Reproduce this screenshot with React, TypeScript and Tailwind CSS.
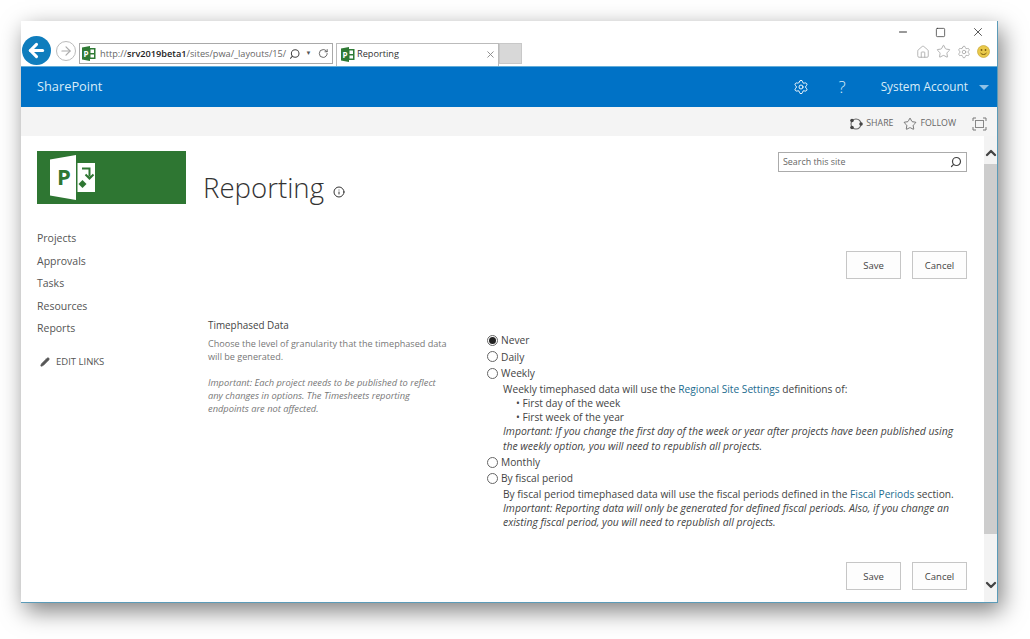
import React from "react";
import { Settings, RotateCw, Search, Star, Home, X, Minus, Square, ChevronUp, ChevronDown, Pencil, ArrowLeft, ArrowRight, Info } from "lucide-react";

function ProjIcon() {
  return (
    <svg width="14" height="15" viewBox="0 0 14 15" className="shrink-0">
      <rect x="5" y="2" width="8.500" height="11" fill="#2f7a35" />
      <rect x="8.500" y="3.500" width="3.500" height="3.500" fill="#fff" />
      <rect x="8.500" y="8.500" width="3.500" height="3" fill="#fff" />
      <path d="M0 1.500L8 0v15l-8-1.500z" fill="#2f7a35" />
      <text x="1.400" y="10.500" fontSize="8" fontWeight="700" fill="#fff" fontFamily="'Open Sans',sans-serif">P</text>
    </svg>
  );
}

function Logo() {
  return (
    <div className="w-[149px] h-[53px] bg-[#2e7632] shrink-0">
      <svg width="149" height="53" viewBox="0 0 149 53">
        <path d="M13 8.500L39 4V49L13 44.500z" fill="#fff" />
        <rect x="40.500" y="12" width="17.500" height="29" fill="#fff" />
        <text x="20" y="34" fontSize="22" fontWeight="700" fill="#2e7632" fontFamily="'Open Sans',sans-serif">P</text>
        <path d="M45 17.500h7.500v8M48.500 23.500l4 4 4-4" stroke="#2e7632" strokeWidth="2" fill="none" />
        <path d="M45.500 29l4 4-4 4-4-4z" fill="#2e7632" />
      </svg>
    </div>
  );
}

function ShareIcon() {
  return (
    <svg width="14" height="14" viewBox="0 0 14 14" className="mr-[3px]">
      <circle cx="7" cy="7" r="5" fill="none" stroke="#666" strokeWidth="1.100" />
      <circle cx="3" cy="3.500" r="1.800" fill="#444" />
      <circle cx="3" cy="10.500" r="1.800" fill="#444" />
      <circle cx="12" cy="7" r="1.800" fill="#444" />
    </svg>
  );
}

function FocusIcon() {
  return (
    <svg width="15" height="14" viewBox="0 0 15 14" className="mr-[10px]">
      <path d="M1 4V1h3M11 1h3v3M14 10v3h-3M4 13H1v-3" fill="none" stroke="#777" />
      <rect x="3.500" y="3.500" width="8" height="7" fill="none" stroke="#888" />
    </svg>
  );
}

function Radio({ checked, label }: { checked?: boolean; label: string }) {
  return (
    <div className="flex items-center h-[16.500px]">
      <span className="w-[11px] h-[11px] rounded-full border border-[#666] flex items-center justify-center mr-[3px] bg-white shrink-0">
        {checked && <span className="w-[7px] h-[7px] rounded-full bg-[#222]" />}
      </span>
      <span>{label}</span>
    </div>
  );
}

function Btn({ label }: { label: string }) {
  return (
    <div className="w-[55px] h-[28px] pt-[2px] border border-[#c6c6c6] bg-[#fdfdfd] flex items-center justify-center text-[9.500px] text-[#444]">
      {label}
    </div>
  );
}

function Buttons() {
  return (
    <div className="flex justify-end gap-[11px]">
      <Btn label="Save" />
      <Btn label="Cancel" />
    </div>
  );
}

export default function App() {
  return (
    <div className="w-[1030px] h-[639px] bg-white pl-[21px] pt-[21px] overflow-hidden" style={{ fontFamily: "'Open Sans','Liberation Sans',sans-serif" }}>
      <div className="w-[977px] h-[582px] bg-white flex flex-col border-r border-b border-[#5b9bb8] shadow-[4px_8px_22px_rgba(0,0,0,0.5)]">
        {/* Browser chrome */}
        <div className="h-[45px] flex shrink-0 relative">
          <div className="flex items-end w-[501px] pl-[1px]">
            <div className="w-[29px] h-[29px] rounded-full bg-[#0f7dbd] flex items-center justify-center mb-[1px] shrink-0">
              <ArrowLeft size={21} strokeWidth={3.500} className="text-white" />
            </div>
            <div className="w-[20px] h-[20px] rounded-full border border-[#bbb] flex items-center justify-center ml-[5px] mb-[5px] shrink-0">
              <ArrowRight size={14} className="text-[#aaa]" />
            </div>
            <div className="w-[254px] h-[21px] border border-[#a9a9a9] ml-[3px] mb-[2px] flex items-center pl-[2px] pr-[4px] text-[9.200px] text-[#666] shrink-0">
              <ProjIcon />
              <span className="ml-[4px] whitespace-nowrap w-[190px]">http://<b className="text-[#222] font-semibold">srv2019beta1</b>/sites/pwa/_layouts/15/</span>
              <Search size={12} strokeWidth={2.200} className="text-[#444] ml-[3px] -scale-x-100" />
              <span className="ml-[5px] text-[6px] text-[#555]">▼</span>
              <RotateCw size={11} className="text-[#555] ml-[6px]" />
            </div>
            <div className="w-[163px] h-[23px] border border-b-0 border-[#bbb] ml-[3px] flex items-center pl-[4px] pr-[2px] pb-[2px] text-[9.200px] text-[#333] shrink-0">
              <ProjIcon />
              <span className="ml-[2px] flex-1">Reporting</span>
              <X size={11} className="text-[#888]" />
            </div>
            <div className="w-[23px] h-[21px] bg-[#d8d8d8] border border-[#c8c8c8] mb-[2px] shrink-0" />
          </div>
          <div className="flex-1 flex flex-col items-end pr-[7px] pt-[4px]">
            <div className="flex items-center h-[14px] text-[#333]">
              <Minus size={12} className="mr-[26px]" />
              <Square size={11} className="mr-[25px]" strokeWidth={1.600} />
              <X size={14} className="mr-[5px]" strokeWidth={1.400} />
            </div>
            <div className="flex items-center mt-[5px] text-[#a0a0a0] gap-[6px]">
              <Home size={14} strokeWidth={1.300} />
              <Star size={15} strokeWidth={1.300} />
              <Settings size={14} strokeWidth={1.300} />
              <svg width="13" height="13" viewBox="0 0 13 13">
                <circle cx="6.500" cy="6.500" r="6" fill="#e9c94a" stroke="#c9a637" strokeWidth="0.700" />
                <circle cx="4.500" cy="5" r="0.900" fill="#7a5c10" />
                <circle cx="8.500" cy="5" r="0.900" fill="#7a5c10" />
                <path d="M3.500 8c1.500 2 4.500 2 6 0" stroke="#7a5c10" fill="none" />
              </svg>
            </div>
          </div>
        </div>

        {/* Suite bar */}
        <div className="h-[41px] bg-[#0072c6] border-t border-[#63add8] flex items-center shrink-0 text-[#d8ecf8]">
          <span className="ml-[16px] text-[12.800px] flex-1">SharePoint</span>
          <Settings size={16} strokeWidth={1.400} className="mr-[29px] text-white" />
          <span className="text-[17px] font-light mr-[35px] text-[#d8ecf8]">?</span>
          <span className="text-[11.800px] mr-[11px]">System Account</span>
          <span className="w-0 h-0 border-x-[5px] border-x-transparent border-t-[5px] border-t-[#8fc1e6] mr-[8px]" />
        </div>

        {/* Ribbon */}
        <div className="h-[29px] bg-[#f4f4f4] flex items-center justify-end shrink-0 text-[8.800px] text-[#666] pt-[5px]">
          <ShareIcon />
          <span className="mr-[10px]">SHARE</span>
          <Star size={14} strokeWidth={1.200} className="text-[#444] mr-[3px]" />
          <span className="mr-[16px]">FOLLOW</span>
          <FocusIcon />
        </div>

        {/* Body */}
        <div className="flex-1 flex min-h-0 text-[#444]">
          <div className="w-[182px] pl-[16px] pt-[15px] shrink-0">
            <Logo />
            <div className="mt-[24px] text-[10.500px] text-[#555] flex flex-col">
              {["Projects", "Approvals", "Tasks", "Resources", "Reports"].map((n) => (
                <div key={n} className="h-[22.500px] flex items-center">{n}</div>
              ))}
              <div className="flex items-center mt-[14px] text-[9.500px]">
                <Pencil size={10} className="ml-[3px] mr-[6px] fill-[#555]" />
                EDIT LINKS
              </div>
            </div>
          </div>

          <div className="flex-1 flex flex-col pr-[17px]">
            <div className="flex justify-between h-[115px]">
              <div className="flex items-center h-[46px] mt-[29px]">
                <span className="text-[27.600px] font-light text-[#333] leading-none">Reporting</span>
                <Info size={12} strokeWidth={2} className="ml-[9px] mt-[7px] text-[#333]" />
              </div>
              <div className="w-[189px] h-[20px] mt-[16px] border border-[#ababab] flex items-center justify-between px-[4px] text-[8.900px] text-[#666]">
                <span>Search this site</span>
                <Search size={12} strokeWidth={2.400} className="text-[#444] -scale-x-100" />
              </div>
            </div>
            <Buttons />
            <div className="flex mt-[38px] h-[245px]">
              <div className="w-[284px] pl-[5px] shrink-0">
                <div className="text-[9.900px] text-[#444] leading-[16px]">Timephased Data</div>
                <div className="text-[9.100px] text-[#777] leading-[13px] mt-[4px] w-[250px]">
                  Choose the level of granularity that the timephased data will be generated.
                </div>
                <div className="text-[9.300px] text-[#777] leading-[13px] mt-[13px] italic w-[240px]">
                  Important: Each project needs to be published to reflect any changes in options. The Timesheets reporting endpoints are not affected.
                </div>
              </div>
              <div className="pt-[15px] text-[10.200px] text-[#444] leading-[14.250px]">
                <Radio checked label="Never" />
                <Radio label="Daily" />
                <Radio label="Weekly" />
                <div className="pl-[16px]">
                  <div>Weekly timephased data will use the <span className="text-[#1c6c8f]">Regional Site Settings</span> definitions of:</div>
                  <div className="pl-[13px]">• First day of the week</div>
                  <div className="pl-[13px]">• First week of the year</div>
                  <div className="italic text-[10.450px]">Important: If you change the first day of the week or year after projects have been published using<br />the weekly option, you will need to republish all projects.</div>
                </div>
                <div className="mt-[1px]"><Radio label="Monthly" /></div>
                <Radio label="By fiscal period" />
                <div className="pl-[16px]">
                  <div>By fiscal period timephased data will use the fiscal periods defined in the <span className="text-[#1c6c8f]">Fiscal Periods</span> section.</div>
                  <div className="italic text-[10.450px]">Important: Reporting data will only be generated for defined fiscal periods. Also, if you change an<br />existing fiscal period, you will need to republish all projects.</div>
                </div>
              </div>
            </div>
            <Buttons />
          </div>

          <div className="w-[13px] shrink-0 bg-[#f3f3f3] flex flex-col items-center justify-between">
            <ChevronUp size={16} strokeWidth={3.500} className="text-[#444] mt-[9px] shrink-0" />
            <div className="w-full flex-1 bg-[#cdcdcd] my-[3px] mb-[43px]" />
            <ChevronDown size={16} strokeWidth={3.500} className="text-[#444] mb-[9px] shrink-0" />
          </div>
        </div>
      </div>
    </div>
  );
}
